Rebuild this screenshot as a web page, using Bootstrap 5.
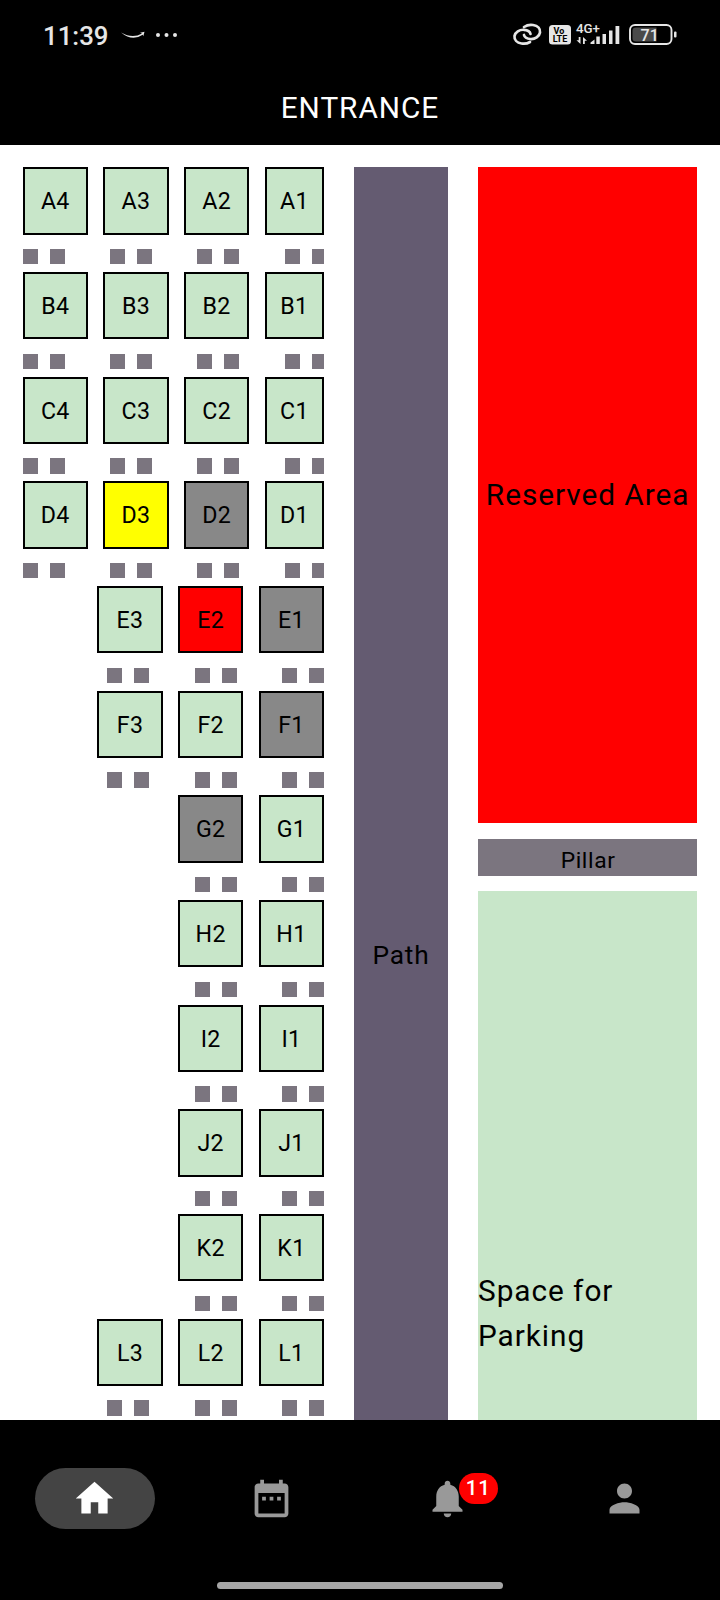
<!DOCTYPE html>
<html lang="en">
<head>
<meta charset="utf-8">
<meta name="viewport" content="width=device-width, initial-scale=1">
<title>Parking</title>
<link rel="stylesheet" href="https://cdn.jsdelivr.net/npm/bootstrap@5.3.0/dist/css/bootstrap.min.css">
<style>
body{font-family:Roboto,"Liberation Sans",sans-serif;height:1600px;overflow:hidden;color:#000}
.status{height:70px;padding:0 43px 0 43px;color:#e6e6e6}
.clock{font-size:25.8px;font-weight:500;line-height:1;padding-top:3px}
.title-bar{height:74.5px;font-size:29.8px;letter-spacing:.95px;line-height:1;padding-top:2px}
.lot{height:1275px;padding:22.8px 22.7px 0 22.7px}
.bays{width:301.3px}
.bay-line{height:67.33px;gap:15.5px;margin-bottom:14.5px}
.bay{flex:0 0 65.2px;border:2px solid #000;background:#c8e6c9;font-size:23.2px;letter-spacing:.3px;line-height:1;padding-top:2px}
.bay.cut{flex:0 1 65.2px;min-width:0}
.busy{background:#888}.mine{background:#ff0}.taken{background:#f00}
.posts{height:15.33px;margin-bottom:7.5px;gap:45.3px;overflow:hidden}
.post-pair{flex:0 0 42px;height:100%;background:linear-gradient(90deg,#7b757f 15.3px,transparent 15.3px,transparent 26.7px,#7b757f 26.7px)}
.lane{width:94px;height:1575px;margin-left:30px;background:#645b71;font-size:26.3px;letter-spacing:.8px;padding-top:1px}
.side{width:219.3px;margin-left:30px}
.reserved{height:655.7px;background:#f00;font-size:29.8px;letter-spacing:.95px}
.pillar{height:37px;margin:15.8px 0 15.2px;background:#7b757f;font-size:22.8px;letter-spacing:.6px;padding:8px 0 0 1px}
.space{height:844px;background:#c8e6c9;font-size:29.8px;letter-spacing:.95px;line-height:45.3px}
.tabs{height:180px;padding-right:1px}
.tab-item{width:176.4px;height:60px;margin-top:49px}
.pill{width:120.5px;height:61px;background:#444}
.count{left:99px;top:4px;width:39.5px;height:31px;background:#f00;font-size:20.5px;font-weight:500;line-height:31px;letter-spacing:.8px}
.handle{width:285.5px;height:7px;background:#a6a6a6;bottom:11px;left:217px}
</style>
</head>
<body class="bg-white d-flex flex-column">
<header class="bg-black text-white flex-shrink-0">
  <div class="status d-flex align-items-center justify-content-between">
    <div class="d-flex align-items-center">
      <span class="clock">11:39</span>
      <svg width="72" height="24" viewBox="108 23 72 24" fill="#e6e6e6"><path d="M121 32.500q11.500 6.500 21 1l-2-.8 4.500-.9-1.200 4.500-.6-1.600q-10.500 7-21.700-2.200z"/><circle cx="158" cy="35" r="2"/><circle cx="166.500" cy="35" r="2"/><circle cx="175" cy="35" r="2"/></svg>
    </div>
    <svg width="165" height="26" viewBox="512 22 165 26" fill="#e6e6e6" font-family="Roboto,sans-serif">
      <g fill="none" stroke="#e6e6e6" stroke-width="2.700" stroke-linecap="round"><path d="M524 27c3-2 6-2.500 9-2 5 .8 7.500 4 7 7.500-.6 4-5 6.800-9.500 6.500-3.500-.2-6-2-6.500-4"/><path d="M530 42c-2.500 1.500-5.500 2-8.500 1.500-4.500-.8-7.500-3.800-7-7.500.6-4 5-6.500 9.500-6.200 3.500.2 6 1.800 6.500 4.200"/></g>
      <rect x="549" y="25" width="22" height="19.500" rx="3.500"/>
      <text x="559" y="34" text-anchor="middle" font-size="9" font-weight="700" fill="#000">Vo</text>
      <text x="560" y="42.300" text-anchor="middle" font-size="9" font-weight="700" fill="#000">LTE</text>
      <text x="576" y="32.500" font-size="13" font-weight="500" textLength="24" lengthAdjust="spacingAndGlyphs">4G+</text>
      <path d="M580.500 37v7l-4-3.800h2.200V37zM583 44v-7l4 3.800h-2.200V44zM590.500 44v-1.500l4-3V44zM596.300 36.500h3.500V44h-3.500zM602.500 34h3.500v10h-3.500zM609 30.500h3.500V44H609zM615.500 26h3.800v18h-3.800z"/>
      <rect x="630" y="25" width="41.500" height="19" rx="5" fill="none" stroke="#e6e6e6" stroke-width="1.900"/>
      <path d="M636 27.500h20.500v14H636q-3.500 0-3.500-3v-8q0-3 3.500-3z" fill="#4a4a4a"/>
      <rect x="674" y="31.500" width="2.500" height="6" rx="1"/>
      <text x="649.700" y="40.500" text-anchor="middle" font-size="16" font-weight="500">71</text>
    </svg>
  </div>
  <div class="title-bar d-flex align-items-center justify-content-center">ENTRANCE</div>
</header>

<main class="lot d-flex align-items-start flex-shrink-0 overflow-hidden">
  <div class="bays flex-shrink-0" id="bays"></div>
  <div class="lane d-flex align-items-center justify-content-center flex-shrink-0">Path</div>
  <div class="side flex-shrink-0">
    <div class="reserved d-flex align-items-center justify-content-center text-nowrap">Reserved Area</div>
    <div class="pillar d-flex align-items-center justify-content-center">Pillar</div>
    <div class="space d-flex align-items-center">Space for Parking</div>
  </div>
</main>

<nav class="tabs bg-black d-flex justify-content-center position-relative flex-shrink-0">
  <div class="tab-item d-flex align-items-center justify-content-center"><div class="pill rounded-pill d-flex align-items-center justify-content-center"><svg width="45" height="45" viewBox="0 0 24 24" fill="#fff"><path d="M10 20v-6h4v6h5v-8h3L12 3 2 12h3v8z"/></svg></div></div>
  <div class="tab-item d-flex align-items-center justify-content-center"><svg width="45" height="45" viewBox="0 0 24 24" fill="#999"><path d="M9 11H7v2h2v-2zm4 0h-2v2h2v-2zm4 0h-2v2h2v-2zm2-7h-1V2h-2v2H8V2H6v2H5c-1.110 0-1.990.9-1.990 2L3 20c0 1.100.89 2 2 2h14c1.100 0 2-.9 2-2V6c0-1.100-.9-2-2-2zm0 16H5V9h14v11z"/></svg></div>
  <div class="tab-item d-flex align-items-center justify-content-center position-relative"><svg width="45" height="45" viewBox="0 0 24 24" fill="#999"><path d="M12 22c1.100 0 2-.9 2-2h-4c0 1.100.89 2 2 2zm6-6v-5c0-3.070-1.640-5.640-4.500-6.320V4c0-.83-.67-1.500-1.500-1.500s-1.500.67-1.500 1.500v.68C7.630 5.360 6 7.920 6 11v5l-2 2v1h16v-1l-2-2z"/></svg><span class="count position-absolute rounded-pill text-white text-center">11</span></div>
  <div class="tab-item d-flex align-items-center justify-content-center"><svg width="45" height="45" viewBox="0 0 24 24" fill="#999"><path d="M12 12c2.210 0 4-1.790 4-4s-1.790-4-4-4-4 1.790-4 4 1.790 4 4 4zm0 2c-2.670 0-8 1.340-8 4v2h16v-2c0-2.660-5.330-4-8-4z"/></svg></div>
  <div class="handle position-absolute rounded-pill"></div>
</nav>

<script src="https://cdn.jsdelivr.net/npm/bootstrap@5.3.0/dist/js/bootstrap.bundle.min.js"></script>
<script>
const rows = {A:4,B:4,C:4,D:4,E:3,F:3,G:2,H:2,I:2,J:2,K:2,L:3};
const state = {D3:'mine',D2:'busy',E2:'taken',E1:'busy',F1:'busy',G2:'busy'};
let html = '';
for (const [row, n] of Object.entries(rows)) {
  const align = n === 4 ? 'justify-content-start' : 'justify-content-end';
  let bays = '', posts = '';
  for (let i = n; i > 0; i--) {
    const id = row + i;
    bays += `<div class="bay d-flex align-items-center justify-content-center ${n === 4 && i === 1 ? 'cut' : ''} ${state[id] || ''}">${id}</div>`;
    posts += '<div class="post-pair"></div>';
  }
  html += `<div class="bay-line d-flex ${align}">${bays}</div><div class="posts d-flex ${align}">${posts}</div>`;
}
document.getElementById('bays').innerHTML = html;
</script>
</body>
</html>
